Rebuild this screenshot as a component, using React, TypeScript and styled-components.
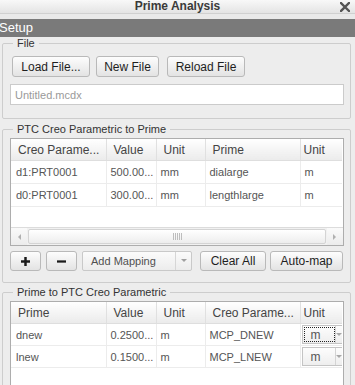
import React from 'react'
import styled, { createGlobalStyle } from 'styled-components'

const GlobalStyle = createGlobalStyle`
  html, body {
    margin: 0;
    padding: 0;
    height: 385px;
    overflow: hidden;
    background: #ededed;
    font-family: "Liberation Sans", Arial, sans-serif;
  }
`

const Window = styled.div`
  width: 355px;
  height: 385px;
  overflow: hidden;
  background: #ededed;
`

const TitleBar = styled.header`
  height: 13px;
  display: grid;
  grid-template-columns: 1fr auto 1fr;
  align-items: center;
  background: linear-gradient(#f8f8f8, #e4e4e4);
  border-bottom: 1px solid #d0d0d0;
  font-size: 12px;
  font-weight: bold;
  color: #3a3a3a;
  line-height: 13px;
`

const TitleText = styled.span`
  grid-column: 2;
`

const CloseButton = styled.span`
  justify-self: end;
  display: flex;
  margin-right: 5px;
`

const Band = styled.div`
  height: 5px;
  background: #e9e9e9;
`

const SectionBar = styled.div`
  height: 18px;
  line-height: 18px;
  background: #7a7a7a;
  color: #ffffff;
  font-size: 13px;
  text-indent: -1px;
`

const Body = styled.main`
  padding: 0 4px 0 2px;
`

const Group = styled.fieldset<{ $top: number; $padTop: number; $padBottom: number }>`
  margin: ${p => p.$top}px 0 0 0;
  min-width: 0;
  padding: ${p => p.$padTop}px 6px ${p => p.$padBottom}px 7px;
  border: 1px solid #cdcdcd;
  border-radius: 2px;
`

const Legend = styled.legend`
  margin-left: 3px;
  padding: 0 4px;
  font-size: 11px;
  line-height: 12px;
  color: #333;
`

const Row = styled.div<{ $inset?: number }>`
  display: flex;
  gap: 6px;
  padding-left: ${p => p.$inset ?? 0}px;
`

const Button = styled.button<{ $w?: number; $ml?: number }>`
  height: 21px;
  width: ${p => (p.$w ? `${p.$w}px` : 'auto')};
  margin-left: ${p => p.$ml ?? 0}px;
  padding: 0 10px;
  display: flex;
  align-items: center;
  justify-content: center;
  background: linear-gradient(#fdfdfd, #e3e3e3);
  border: 1px solid #b9b9b9;
  border-radius: 3px;
  font-family: inherit;
  font-size: 12px;
  color: #1e1e1e;
  white-space: nowrap;
`

const FileInput = styled.input`
  box-sizing: border-box;
  display: block;
  width: 100%;
  height: 21px;
  margin-top: 7px;
  padding: 0 4px;
  border: 1px solid #cbcbcb;
  background: #fff;
  font-family: inherit;
  font-size: 11px;
  &::placeholder {
    color: #9a9a9a;
  }
`

const TableBox = styled.div<{ $h: number }>`
  box-sizing: border-box;
  height: ${p => p.$h}px;
  border: 1px solid #adadad;
  background: #fff;
  display: flex;
  flex-direction: column;
  overflow: hidden;
`

const TableArea = styled.div`
  flex: 1;
  overflow: hidden;
`

const Grid = styled.table`
  width: 331px;
  table-layout: fixed;
  border-collapse: collapse;
`

const Head = styled.th`
  height: 21px;
  padding: 0 0 0 7px;
  text-align: left;
  font-weight: normal;
  font-size: 12px;
  color: #444;
  background: linear-gradient(#ffffff, #ebebeb);
  border-right: 1px solid #e0e0e0;
  border-bottom: 1px solid #dedede;
  white-space: nowrap;
  overflow: hidden;
  &:last-child {
    padding-left: 3px;
    border-right: none;
  }
`

const Cell = styled.td<{ $h: number; $tight?: boolean }>`
  height: ${p => p.$h}px;
  padding: 0 0 0 ${p => (p.$tight ? 1 : 4)}px;
  font-size: 11px;
  color: #555;
  border-right: 1px solid #ececec;
  border-bottom: 1px solid #ececec;
  white-space: nowrap;
  overflow: hidden;
  &:first-child {
    padding-left: 5px;
  }
  &:last-child {
    border-right: none;
  }
`

const ScrollBar = styled.div`
  height: 17px;
  display: flex;
  background: #f1f1f1;
  border-top: 1px solid #dcdcdc;
`

const ScrollArrow = styled.div`
  width: 16px;
  display: flex;
  align-items: center;
  justify-content: center;
  background: linear-gradient(#fafafa, #ececec);
`

const ScrollThumb = styled.div`
  flex: 1;
  margin: 1px 1px;
  display: flex;
  align-items: center;
  justify-content: center;
  background: linear-gradient(#ffffff, #ededed);
  border: 1px solid #d4d4d4;
  border-radius: 2px;
`

const Toolbar = styled.div`
  display: flex;
  gap: 5px;
  margin-top: 5px;
  & > button {
    height: 20px;
  }
`

const Combo = styled.div`
  box-sizing: border-box;
  width: 110px;
  height: 20px;
  display: flex;
  background: linear-gradient(#fbfbfb, #ececec);
  border: 1px solid #c9c9c9;
  border-radius: 2px;
  font-size: 11px;
  color: #505050;
`

const ComboText = styled.span`
  flex: 1;
  padding-left: 8px;
  line-height: 18px;
`

const ComboArrow = styled.span`
  width: 15px;
  display: flex;
  align-items: center;
  justify-content: center;
  border-left: 1px solid #d6d6d6;
`

const UnitSelect = styled.div`
  box-sizing: border-box;
  width: 42px;
  height: 19px;
  display: flex;
  border: 1px solid #c4c4c4;
  background: linear-gradient(#fdfdfd, #eeeeee);
`

const UnitValue = styled.span<{ $focus?: boolean }>`
  box-sizing: border-box;
  width: 31px;
  padding-left: 6px;
  line-height: 15px;
  margin: 1px 0 1px 1px;
  border: 1px dotted ${p => (p.$focus ? '#222' : 'transparent')};
  font-size: 12px;
  color: #555;
`

const UnitArrow = styled.span`
  flex: 1;
  display: flex;
  align-items: center;
  justify-content: flex-end;
  border-left: 1px solid #d4d4d4;
  padding-right: 1px;
`

const Triangle = ({ dir, color = '#9a9a9a' }: { dir: 'down' | 'left' | 'right'; color?: string }) => {
  const pts = dir === 'down' ? '0,0 6,0 3,3' : dir === 'left' ? '4,0 4,6 1,3' : '0,0 0,6 3,3'
  return (
    <svg width={dir === 'down' ? 6 : 5} height={dir === 'down' ? 4 : 6} viewBox={dir === 'down' ? '0 0 6 4' : '0 0 5 6'}>
      <polygon points={pts} fill={color} />
    </svg>
  )
}

const Grip = () => (
  <svg width="9" height="7" viewBox="0 0 9 7">
    {[0, 2, 4, 6, 8].map(x => (
      <rect key={x} x={x} y={0} width={1} height={7} fill="#bdbdbd" />
    ))}
  </svg>
)

const CloseIcon = () => (
  <svg width="10" height="10" viewBox="0 0 10 10">
    <path d="M1 1 L9 9 M9 1 L1 9" stroke="#555" strokeWidth="2.4" strokeLinecap="square" />
  </svg>
)

const PlusIcon = () => (
  <svg width="11" height="11" viewBox="0 0 11 11">
    <rect x="0" y="4" width="11" height="3" fill="#1a1a1a" />
    <rect x="4" y="0" width="3" height="11" fill="#1a1a1a" />
  </svg>
)

const MinusIcon = () => (
  <svg width="12" height="3" viewBox="0 0 12 3">
    <rect x="0" y="0" width="12" height="3" fill="#1a1a1a" />
  </svg>
)

const Cols = () => (
  <colgroup>
    <col style={{ width: 95 }} />
    <col style={{ width: 50 }} />
    <col style={{ width: 49 }} />
    <col style={{ width: 95 }} />
    <col style={{ width: 42 }} />
  </colgroup>
)

const creoToPrime = [
  { creo: 'd1:PRT0001', value: '500.00...', unit: 'mm', prime: 'dialarge', primeUnit: 'm' },
  { creo: 'd0:PRT0001', value: '300.00...', unit: 'mm', prime: 'lengthlarge', primeUnit: 'm' },
]

const primeToCreo = [
  { prime: 'dnew', value: '0.2500...', unit: 'm', creo: 'MCP_DNEW', creoUnit: 'm' },
  { prime: 'lnew', value: '0.1500...', unit: 'm', creo: 'MCP_LNEW', creoUnit: 'm' },
]

const App: React.FC = () => {
  return (
    <Window>
      <GlobalStyle />
      <TitleBar>
        <TitleText>Prime Analysis</TitleText>
        <CloseButton>
          <CloseIcon />
        </CloseButton>
      </TitleBar>
      <Band />
      <SectionBar>Setup</SectionBar>

      <Body>
        <Group $top={0} $padTop={7} $padBottom={13}>
          <Legend>File</Legend>
          <Row $inset={2}>
            <Button $w={78}>Load File...</Button>
            <Button $w={63}>New File</Button>
            <Button $w={78} $ml={2}>Reload File</Button>
          </Row>
          <FileInput placeholder="Untitled.mcdx" readOnly />
        </Group>

        <Group $top={4} $padTop={3} $padBottom={11}>
          <Legend>PTC Creo Parametric to Prime</Legend>
          <TableBox $h={108}>
            <TableArea>
              <Grid>
                <Cols />
                <thead>
                  <tr>
                    <Head>Creo Parame...</Head>
                    <Head>Value</Head>
                    <Head>Unit</Head>
                    <Head>Prime</Head>
                    <Head>Unit</Head>
                  </tr>
                </thead>
                <tbody>
                  {creoToPrime.map(r => (
                    <tr key={r.creo}>
                      <Cell $h={22}>{r.creo}</Cell>
                      <Cell $h={22}>{r.value}</Cell>
                      <Cell $h={22}>{r.unit}</Cell>
                      <Cell $h={22}>{r.prime}</Cell>
                      <Cell $h={22}>{r.primeUnit}</Cell>
                    </tr>
                  ))}
                </tbody>
              </Grid>
            </TableArea>
            <ScrollBar>
              <ScrollArrow>
                <Triangle dir="left" color="#b0b0b0" />
              </ScrollArrow>
              <ScrollThumb>
                <Grip />
              </ScrollThumb>
              <ScrollArrow>
                <Triangle dir="right" color="#b0b0b0" />
              </ScrollArrow>
            </ScrollBar>
          </TableBox>
          <Toolbar>
            <Button $w={31}>
              <PlusIcon />
            </Button>
            <Button $w={31}>
              <MinusIcon />
            </Button>
            <Combo>
              <ComboText>Add Mapping</ComboText>
              <ComboArrow>
                <Triangle dir="down" color="#a0a0a0" />
              </ComboArrow>
            </Combo>
            <Button $w={66} $ml={3}>Clear All</Button>
            <Button $w={73} $ml={-1}>Auto-map</Button>
          </Toolbar>
        </Group>

        <Group $top={3} $padTop={3} $padBottom={0}>
          <Legend>Prime to PTC Creo Parametric</Legend>
          <TableBox $h={120}>
            <TableArea>
              <Grid>
                <Cols />
                <thead>
                  <tr>
                    <Head>Prime</Head>
                    <Head>Value</Head>
                    <Head>Unit</Head>
                    <Head>Creo Parame...</Head>
                    <Head>Unit</Head>
                  </tr>
                </thead>
                <tbody>
                  {primeToCreo.map((r, i) => (
                    <tr key={r.prime}>
                      <Cell $h={21}>{r.prime}</Cell>
                      <Cell $h={21}>{r.value}</Cell>
                      <Cell $h={21}>{r.unit}</Cell>
                      <Cell $h={21}>{r.creo}</Cell>
                      <Cell $h={21} $tight>
                        <UnitSelect>
                          <UnitValue $focus={i === 0}>{r.creoUnit}</UnitValue>
                          <UnitArrow>
                            <Triangle dir="down" color="#a8a8a8" />
                          </UnitArrow>
                        </UnitSelect>
                      </Cell>
                    </tr>
                  ))}
                </tbody>
              </Grid>
            </TableArea>
          </TableBox>
        </Group>
      </Body>
    </Window>
  )
}

export default App
